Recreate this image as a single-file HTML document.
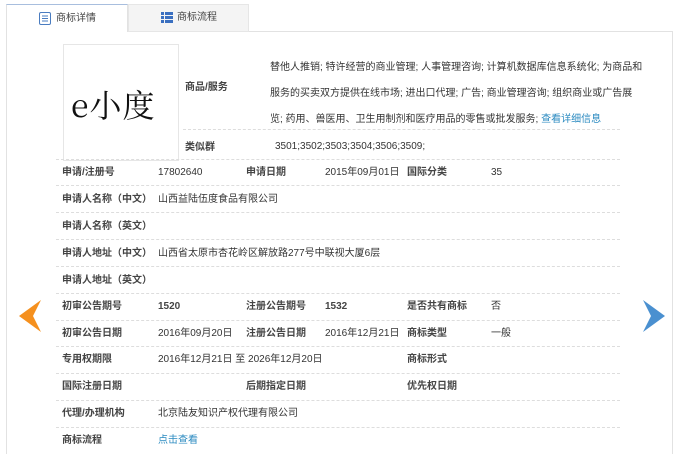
<!DOCTYPE html>
<html><head><meta charset="utf-8"><style>
html,body{margin:0;width:679px;height:454px;overflow:hidden}
body{background:#fff;font-family:"Liberation Sans","Noto Sans CJK SC",sans-serif;font-size:10px;color:#333;position:relative}
.a{position:absolute;white-space:nowrap;line-height:14px}
.b{font-weight:bold;color:#444}
.line{position:absolute;left:56px;width:564px;border-top:1px dashed #ddd;height:0}
</style></head><body>
<div class="a" style="left:6px;top:31px;width:665px;height:430px;border-left:1px solid #e2e2e2;border-right:1px solid #e2e2e2;border-top:1px solid #e2e2e2"></div>
<div class="a" style="left:6px;top:4px;width:120px;height:27px;border:1px solid #e2e2e2;border-top:1px solid #a8bede;border-bottom:none;background:#fff"></div>
<div class="a" style="left:128px;top:4px;width:119px;height:26px;border:1px solid #e6e6e6;background:#f4f4f4"></div>
<svg class="a" style="left:39px;top:12px" width="12" height="13"><rect x="0.5" y="0.5" width="11" height="12" rx="1.5" fill="#fff" stroke="#4a7cc0"/><path d="M3 4h6M3 6.5h6M3 9h6" stroke="#4a7cc0"/></svg>
<div class="a" style="left:56px;top:12px;color:#444">商标详情</div>
<svg class="a" style="left:161px;top:12px" width="12" height="11"><rect x="0" y="0" width="3" height="3" fill="#3a6fc0"/><rect x="4" y="0" width="8" height="3" fill="#3a6fc0"/><rect x="0" y="4" width="3" height="3" fill="#3a6fc0"/><rect x="4" y="4" width="8" height="3" fill="#3a6fc0"/><rect x="0" y="8" width="3" height="3" fill="#3a6fc0"/><rect x="4" y="8" width="8" height="3" fill="#3a6fc0"/></svg>
<div class="a" style="left:177px;top:11px;color:#444">商标流程</div>

<div class="a" style="left:63px;top:44px;width:114px;height:115px;border:1px solid #e6e6e6"></div>
<div class="a" style="left:71px;top:84px;font-family:'Noto Serif CJK SC','Liberation Serif',serif;font-size:32px;line-height:40px;color:#111;letter-spacing:1px">e小度</div>
<div class="a b" style="left:185px;top:81px">商品/服务</div>
<div class="a" style="left:270px;top:55px;line-height:26px">替他人推销; 特许经营的商业管理; 人事管理咨询; 计算机数据库信息系统化; 为商品和<br>服务的买卖双方提供在线市场; 进出口代理; 广告; 商业管理咨询; 组织商业或广告展<br>览; 药用、兽医用、卫生用制剂和医疗用品的零售或批发服务; <span style="color:#2a8ac0">查看详细信息</span></div>
<div class="line" style="left:183px;width:437px;top:129px"></div>
<div class="a b" style="left:185px;top:141px">类似群</div>
<div class="a" style="left:275px;top:140px">3501;3502;3503;3504;3506;3509;</div>
<div class="line" style="top:159px"></div>

<div class="a b" style="left:62px;top:166px">申请/注册号</div><div class="a" style="left:158px;top:166px">17802640</div>
<div class="a b" style="left:246px;top:166px">申请日期</div><div class="a" style="left:325px;top:166px">2015年09月01日</div>
<div class="a b" style="left:407px;top:166px">国际分类</div><div class="a" style="left:491px;top:166px">35</div>
<div class="line" style="top:185px"></div>
<div class="a b" style="left:62px;top:193px">申请人名称（中文）</div><div class="a" style="left:158px;top:193px">山西益陆伍度食品有限公司</div>
<div class="line" style="top:212px"></div>
<div class="a b" style="left:62px;top:220px">申请人名称（英文）</div>
<div class="line" style="top:239px"></div>
<div class="a b" style="left:62px;top:247px">申请人地址（中文）</div><div class="a" style="left:158px;top:247px">山西省太原市杏花岭区解放路277号中联视大厦6层</div>
<div class="line" style="top:266px"></div>
<div class="a b" style="left:62px;top:274px">申请人地址（英文）</div>
<div class="line" style="top:293px"></div>
<div class="a b" style="left:62px;top:300px">初审公告期号</div><div class="a b" style="left:158px;top:300px">1520</div>
<div class="a b" style="left:246px;top:300px">注册公告期号</div><div class="a b" style="left:325px;top:300px">1532</div>
<div class="a b" style="left:407px;top:300px">是否共有商标</div><div class="a" style="left:491px;top:300px">否</div>
<div class="line" style="top:320px"></div>
<div class="a b" style="left:62px;top:327px">初审公告日期</div><div class="a" style="left:158px;top:327px">2016年09月20日</div>
<div class="a b" style="left:246px;top:327px">注册公告日期</div><div class="a" style="left:325px;top:327px">2016年12月21日</div>
<div class="a b" style="left:407px;top:327px">商标类型</div><div class="a" style="left:491px;top:327px">一般</div>
<div class="line" style="top:346px"></div>
<div class="a b" style="left:62px;top:353px">专用权期限</div><div class="a" style="left:158px;top:353px">2016年12月21日 至 2026年12月20日</div>
<div class="a b" style="left:407px;top:353px">商标形式</div>
<div class="line" style="top:373px"></div>
<div class="a b" style="left:62px;top:380px">国际注册日期</div>
<div class="a b" style="left:246px;top:380px">后期指定日期</div>
<div class="a b" style="left:407px;top:380px">优先权日期</div>
<div class="line" style="top:400px"></div>
<div class="a b" style="left:62px;top:407px">代理/办理机构</div><div class="a" style="left:158px;top:407px">北京陆友知识产权代理有限公司</div>
<div class="line" style="top:427px"></div>
<div class="a b" style="left:62px;top:434px">商标流程</div><div class="a" style="left:158px;top:434px;color:#2a8ac0">点击查看</div>

<svg class="a" style="left:19px;top:300px" width="24" height="32"><path d="M22 0L0 16L22 32L14 16Z" fill="#f5901e"/></svg>
<svg class="a" style="left:641px;top:300px" width="24" height="32"><path d="M2 0L24 16L2 32L10 16Z" fill="#4a90d0"/></svg>
</body></html>
